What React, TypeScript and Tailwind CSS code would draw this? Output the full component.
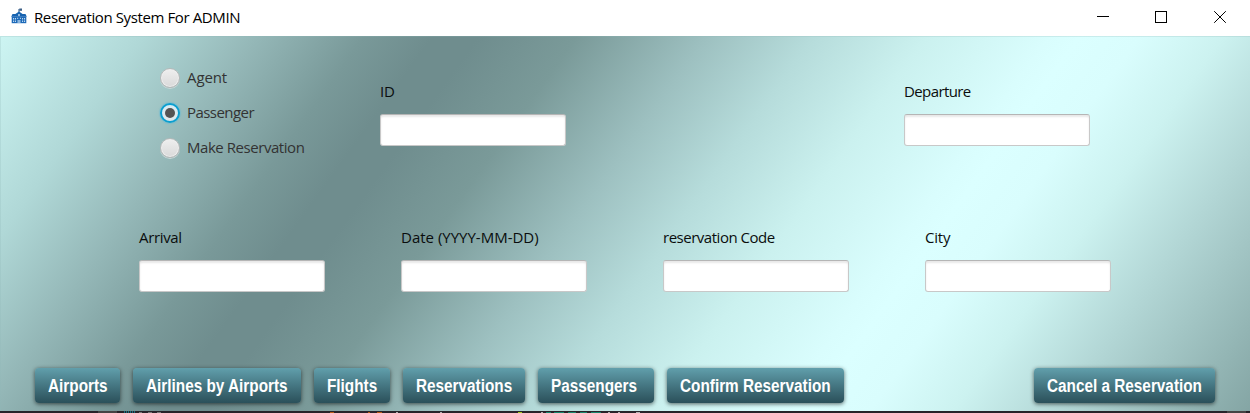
import React from "react";

function SchoolIcon() {
  return (
    <svg width="16" height="16" viewBox="0 0 16 16" className="block">
      <path d="M7.500 1h1v5h-1z" fill="#1c4f86" />
      <path d="M8.300 .500h2.700v2.300H8.300z" fill="#3c5f86" />
      <path d="M8 3.600 11.600 6H14.500L15.800 8.800H.2L1.500 6H4.400z" fill="#1763b0" />
      <path d="M.7 8.600h14.600V15.200H.7z" fill="#1c69b8" />
      <circle cx="8" cy="6.900" r="1" fill="#bcd7f0" />
      <path d="M2 10h1.200v1.400H2zM4 10h1v1.400H4zM11 10h1v1.400h-1zM12.900 10h1.200v1.400h-1.200zM2 12.500h1.200v1.400H2zM4 12.500h1v1.400H4zM11 12.500h1v1.400h-1zM12.900 12.500h1.200v1.400h-1.200zM6.200 9.700h1v1.300h-1zM8.900 9.700h1v1.300h-1zM6.600 12h1.100v3H6.600zM8.300 12h1.100v3H8.300z" fill="#bcd7f0" />
    </svg>
  );
}

function TitleBar() {
  return (
    <header className="flex h-9 shrink-0 items-center bg-white pl-[11px]">
      <div className="pb-[4px]"><SchoolIcon /></div>
      <h1 className="ml-[7px] whitespace-nowrap pb-0.5 text-[15px] font-normal leading-5 tracking-[-0.39px] text-black">
        Reservation System For ADMIN
      </h1>
      <svg width="132" height="14" viewBox="0 0 132 14" className="ml-auto mr-[22px] block" fill="none" stroke="#000">
        <path d="M1 5.500h12M59.500 .500h11v11h-11z" shapeRendering="crispEdges" />
        <path d="M118.200 .200l11.600 11.600M129.800 .200l-11.600 11.600" />
      </svg>
    </header>
  );
}

function Radio({ label, spacing, checked = false }: { label: string; spacing: string; checked?: boolean }) {
  return (
    <label className="flex h-[35px] items-center gap-[7px]">
      {checked ? (
        <span className="flex size-5 items-center justify-center rounded-full border-2 border-[#0b9fd0] bg-linear-to-b from-[#d8edf5] to-[#e1e8ea] shadow-[0_0_1px_1px_#63bbd680]">
          <span className="size-[10px] rounded-full bg-[#545454]" />
        </span>
      ) : (
        <span className="size-5 rounded-full border border-[#b5b9b9] bg-linear-to-b from-[#efefef] to-[#d9d9d9] shadow-[inset_0_0_0_1px_#eeeeee,0_1px_0_#c8d8d8]" />
      )}
      <span className={"whitespace-nowrap pb-0.5 text-[15px] leading-5 text-[#333] " + spacing}>{label}</span>
    </label>
  );
}

function Field({ label, spacing }: { label: string; spacing: string }) {
  return (
    <label className="block w-[186px]">
      <span className={"block h-5 whitespace-nowrap text-[15px] leading-[18px] text-[#0a0d0d] " + spacing}>{label}</span>
      <input className="mt-3 block h-8 w-full rounded-[3px] border border-[#c8c8c8] border-t-[#b5b5b5] bg-white px-2 shadow-[inset_0_2px_2px_#e8e8e8] outline-none" />
    </label>
  );
}

function ActionButton({ label, width }: { label: string; width: string }) {
  return (
    <button className={"flex h-[35px] shrink-0 items-center rounded-[4px] bg-linear-to-b from-[#619fac] to-[#2b505a] pl-[13px] shadow-[0_1px_4px_#00000099] " + width}>
      <span className="origin-left scale-x-[0.851] whitespace-nowrap font-['Liberation_Sans',Arial,sans-serif] text-[18px] font-bold leading-5 text-white">{label}</span>
    </button>
  );
}

export default function App() {
  return (
    <div className="flex h-[413px] w-[1250px] flex-col overflow-hidden font-['Open_Sans','Noto_Sans',sans-serif]">
      <TitleBar />
      <main className="flex h-[375px] shrink-0 flex-col bg-[linear-gradient(125.8deg,#cdf5f3_0%,#b0d8d7_9.5%,#94b7b7_17%,#799999_24%,#6f8d8e_28.5%,#6f8d8e_31.5%,#7a9a99_38%,#9dc0c0_46.5%,#b6dcdb_53.5%,#cbf1ef_61%,#d9fdfd_69%,#dbffff_71%,#d9fdfd_75%,#ccf2f0_80.5%,#b2d6d5_87.500%,#84a5a4_100%)] pl-px pt-px shadow-[inset_1px_1px_0_#8fb8b740]">
        <section className="flex h-[181px] shrink-0 items-start">
          <div className="ml-[159px] mt-[23px] w-[220px]">
            <Radio label="Agent" spacing="tracking-[-0.1px]" />
            <Radio label="Passenger" spacing="tracking-[-0.55px]" checked />
            <Radio label="Make Reservation" spacing="tracking-[-0.45px]" />
          </div>
          <div className="mt-[45px] flex gap-[338px]">
            <Field label="ID" spacing="tracking-[-0.2px]" />
            <Field label="Departure" spacing="tracking-[-0.6px]" />
          </div>
        </section>
        <section className="ml-[138px] mt-[10px] flex h-[64px] shrink-0 gap-[76px]">
          <Field label="Arrival" spacing="tracking-[-0.35px]" />
          <Field label="Date (YYYY-MM-DD)" spacing="tracking-[0px]" />
          <Field label="reservation Code" spacing="tracking-[-0.48px]" />
          <Field label="City" spacing="tracking-[-0.2px]" />
        </section>
        <nav className="mb-2 ml-[34px] mr-[35px] mt-auto flex gap-[13px]">
          <ActionButton label="Airports" width="w-[85px]" />
          <ActionButton label="Airlines by Airports" width="w-[168px]" />
          <ActionButton label="Flights" width="w-[76px]" />
          <ActionButton label="Reservations" width="w-[122px]" />
          <ActionButton label="Passengers" width="w-[116px]" />
          <ActionButton label="Confirm Reservation" width="w-[177px]" />
          <div className="ml-auto"><ActionButton label="Cancel a Reservation" width="w-[181px]" /></div>
        </nav>
      </main>
      <footer className="h-[2px] shrink-0 bg-[#272329]">
        <svg width="1250" height="2" className="block" shapeRendering="crispEdges">
          <path d="M98 1h19M1227 1h19" stroke="#444" strokeWidth="2" />
          <path d="M124 1h12" stroke="#187080" strokeWidth="2" strokeDasharray="1 1" />
          <path d="M139 1.500h3M148 1.500h4M157 1.500h4" stroke="#777" />
          <path d="M330 1.500h4M368 1.500h2M377 1.500h5" stroke="#b55b16" />
          <path d="M396 1.500h2M440 1.500h2M541 1.500h2M608 1.500h2M618 1.500h2M636 1.500h4" stroke="#b0b0b0" />
          <path d="M518 1.500h4" stroke="#a5cd20" />
          <path d="M546 1.500h5M554 1.500h10M568 1.500h8M580 1.500h7M591 1.500h10" stroke="#17856c" />
        </svg>
      </footer>
    </div>
  );
}
